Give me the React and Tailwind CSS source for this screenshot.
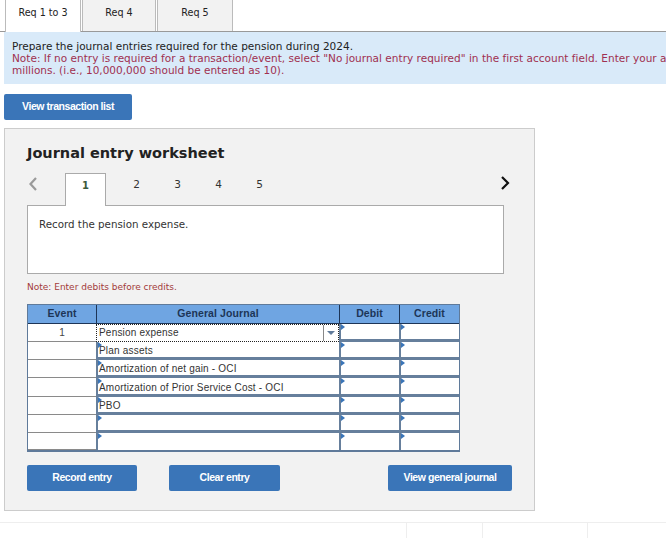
const verdana = "font-['DejaVu_Sans',sans-serif]";
const arial = "font-['Liberation_Sans',Arial,sans-serif]";

const reqTabs = [
  { label: "Req 1 to 3", cls: "w-[76px] bg-white border-b-0 h-[32px] -mb-px z-10 relative" },
  { label: "Req 4", cls: "w-[74px] bg-[#f2f2f2] h-[31px] ml-[1px]" },
  { label: "Req 5", cls: "w-[76px] bg-[#f2f2f2] h-[31px] ml-[1px]" },
];

const rows = [
  { h: "h-[18px]", event: "1", account: "Pension expense", active: true },
  { h: "h-[18px]", account: "Plan assets" },
  { h: "h-[18px]", account: "Amortization of net gain - OCI" },
  { h: "h-[19px]", account: "Amortization of Prior Service Cost - OCI" },
  { h: "h-[18px]", account: "PBO" },
  { h: "h-[18px]", account: "" },
  { h: "h-[17px]", account: "" },
];

function Marker() {
  return <span className="absolute left-0 top-0 w-0 h-0 border-y-[3px] border-y-transparent border-l-[4px] border-l-[#3a75b8]" />;
}

function BlueButton({ children, className }) {
  return (
    <button className={"h-[26px] pb-[1px] bg-[#3a75b8] rounded-[2px] text-white font-bold text-[10.5px] tracking-[-0.45px] " + arial + " " + className}>
      {children}
    </button>
  );
}

function Chevron({ points, color }) {
  return (
    <svg width="12" height="14" viewBox="0 0 12 14" fill="none">
      <polyline points={points} stroke={color} strokeWidth="2.2" />
    </svg>
  );
}

export default function App() {
  return (
    <div className={"w-[666px] h-[538px] bg-white overflow-hidden relative " + verdana}>
      <div className="flex pl-[5px] h-[32px] border-b border-[#999]">
        {reqTabs.map((t) => (
          <div key={t.label} className={"flex items-center justify-center border-x border-[#bbb] text-[9.6px] text-[#222] pb-[5px] " + t.cls}>
            {t.label}
          </div>
        ))}
      </div>

      <div className="ml-[4px] h-[52px] bg-[#d9eaf9] pl-[8px] pt-[8px] text-[10.5px] leading-[12px] whitespace-nowrap overflow-hidden">
        <div className="text-[#222]">Prepare the journal entries required for the pension during 2024.</div>
        <div className="text-[#a03050] tracking-[0.02px]">Note: If no entry is required for a transaction/event, select "No journal entry required" in the first account field. Enter your answers in</div>
        <div className="text-[#a03050]">millions. (i.e., 10,000,000 should be entered as 10).</div>
      </div>

      <BlueButton className="block w-[128px] ml-[4px] mt-[10px]">View transaction list</BlueButton>

      <div className="w-[531px] h-[383px] ml-[4px] mt-[8px] bg-[#f2f2f2] border border-[#ccc] pl-[22px] pt-[15px]">
        <h2 className="text-[14.5px] leading-[18px] font-bold text-[#222]">Journal entry worksheet</h2>

        <div className="flex items-center h-[32px] mt-[11px] relative w-[477px]">
          <span className="w-[38px] pl-[1px] pb-[11px] flex"><Chevron points="8,1 2.5,7 8,13" color="#9a9a9a" /></span>
          <div className="self-start w-[41px] h-[33px] pb-[9px] bg-white border border-b-0 border-[#aaa] flex items-center justify-center text-[10px] font-bold text-[#3c5a3c] relative z-10">1</div>
          <span className="w-[10px]" />
          {["2", "3", "4", "5"].map((n) => (
            <span key={n} className="w-[41px] text-center text-[10.5px] text-[#333] pb-[8px]">{n}</span>
          ))}
          <span className="absolute right-[-7px] top-[3px]"><Chevron points="3,1 9,7 3,13" color="#111" /></span>
        </div>

        <div className="w-[477px] h-[69px] bg-white border border-[#aaa] pl-[11px] pt-[11px] text-[10.3px] leading-[14px] text-[#333]">
          Record the pension expense.
        </div>

        <p className="mt-[6px] text-[9px] leading-[14px] text-[#a33a3a]">Note: Enter debits before credits.</p>

        <div className={"w-[433px] mt-[10px] border border-[#5f7a9a] border-b-[2px] " + arial}>
          <div className="flex h-[19px] bg-[#6fa5e2] text-[10.5px] font-bold text-[#1d3557] tracking-[0.1px] border-b border-[#1d3557]">
            <div className="w-[68px] flex items-center justify-center">Event</div>
            <div className="w-[243px] flex items-center justify-center border-l border-[#1d3557]">General Journal</div>
            <div className="w-[60px] flex items-center justify-center border-l border-[#1d3557]">Debit</div>
            <div className="flex-1 flex items-center justify-center border-l border-[#1d3557]">Credit</div>
          </div>
          {rows.map((r, i) => (
            <div key={i} className={"flex bg-white " + r.h}>
              <div className="w-[68px] flex items-center justify-center text-[10px] text-[#444] border-b border-[#8a8a8a]">{r.event}</div>
              {r.active ? (
                <div className="w-[243px] flex items-center justify-between border border-dotted border-[#222] pl-[2px] text-[10px] tracking-[0.2px] text-[#333]">
                  <span className="pb-[1px]">{r.account}</span>
                  <span className="h-full w-[15px] border-l border-[#888] flex items-center justify-center">
                    <span className="w-0 h-0 border-x-[4px] border-x-transparent border-t-[4px] border-t-[#5f7a9a]" />
                  </span>
                </div>
              ) : (
                <div className={"w-[243px] relative flex items-center border-l-[2px] border-[#667f9c] pl-[1px] pt-[2px] text-[10px] tracking-[0.2px] text-[#333] " + (i < rows.length - 1 ? "border-b-[3px]" : "")}>
                  <Marker />
                  {r.account}
                </div>
              )}
              <div className={"w-[60px] relative border-l-[2px] border-[#667f9c] " + (i < rows.length - 1 ? "border-b-[3px]" : "")}><Marker /></div>
              <div className={"flex-1 relative border-l-[2px] border-[#667f9c] " + (i < rows.length - 1 ? "border-b-[3px]" : "")}><Marker /></div>
            </div>
          ))}
        </div>

        <div className="flex mt-[13px] w-[485px]">
          <BlueButton className="w-[110px]">Record entry</BlueButton>
          <BlueButton className="w-[111px] ml-[32px]">Clear entry</BlueButton>
          <BlueButton className="w-[124px] ml-auto">View general journal</BlueButton>
        </div>
      </div>

      <div className="mt-[11px] border-t border-[#eee] h-[20px] flex">
        <div className="ml-[406px] w-[77px] border-x border-[#eee]" />
        <div className="w-[105px] border-r border-[#eee]" />
      </div>
    </div>
  );
}
